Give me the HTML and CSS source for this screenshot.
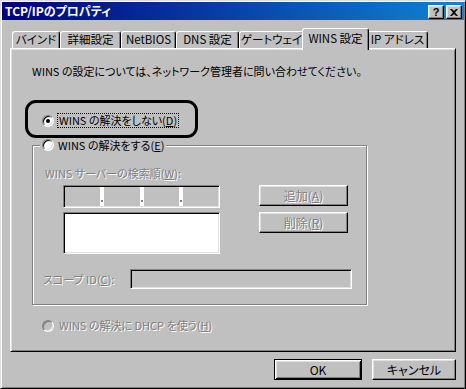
FILE: index.html
```html
<!DOCTYPE html>
<html lang="ja">
<head>
<meta charset="utf-8">
<title>TCP/IPのプロパティ</title>
<link rel="stylesheet" href="styles.css">
</head>
<body>
<div class="window">
  <div class="titlebar">
    <span class="title">TCP/IPのプロパティ</span>
    <div class="title-buttons">
      <div class="tbtn help">?</div>
      <div class="tbtn close">
        <svg width="8" height="7" viewBox="0 0 8 7"><path d="M0 0h2l2 2 2-2h2L5 3.5 8 7H6L4 5 2 7H0l3-3.5z" fill="#000"/></svg>
      </div>
    </div>
  </div>
  <div class="content">
    <div class="tabs">
      <div class="tab tab-bind">バインド</div>
      <div class="tab tab-adv">詳細設定</div>
      <div class="tab tab-netbios">NetBIOS</div>
      <div class="tab tab-dns">DNS 設定</div>
      <div class="tab tab-gw">ゲートウェイ</div>
      <div class="tab tab-wins active">WINS 設定</div>
      <div class="tab tab-ip">IP アドレス</div>
    </div>
    <div class="panel">
      <p class="intro">WINS の設定については、ネットワーク管理者に問い合わせてください。</p>
      <div class="radio-row first">
        <span class="radio checked"></span>
        <span class="label focus">WINS の解決をしない(<u>D</u>)</span>
      </div>
      <div class="group">
        <div class="legend">
          <span class="radio"></span>
          <span class="label">WINS の解決をする(<u>E</u>)</span>
        </div>
        <div class="group-label disabled">WINS サーバーの検索順(<u>W</u>):</div>
        <div class="server-row">
          <div class="server-fields">
            <div class="ipfield">
              <span class="seg"></span><span class="sep"></span>
              <span class="seg"></span><span class="sep"></span>
              <span class="seg"></span><span class="sep"></span>
              <span class="seg"></span>
            </div>
            <div class="listbox"></div>
          </div>
          <div class="server-buttons">
            <div class="btn disabled">追加(<u>A</u>)</div>
            <div class="btn disabled">削除(<u>R</u>)</div>
          </div>
        </div>
        <div class="scope-row">
          <span class="scope-label disabled">スコープ ID(<u>C</u>):</span>
          <div class="field"></div>
        </div>
      </div>
      <div class="radio-row last">
        <span class="radio off"></span>
        <span class="label disabled">WINS の解決に DHCP を使う(<u>H</u>)</span>
      </div>
      <div class="annotation"></div>
    </div>
    <div class="footer">
      <div class="btn default">OK</div>
      <div class="btn cancel">キャンセル</div>
    </div>
  </div>
</div>
</body>
</html>
```
FILE: styles.css
```css
* { box-sizing: border-box; }
html, body { margin: 0; padding: 0; }
body {
  background: #c0c0c0;
  font-family: "Noto Sans CJK JP", "Noto Sans", sans-serif;
  font-size: 11px;
  line-height: 13px;
  color: #000;
  font-feature-settings: "palt";
}
u { text-decoration: underline; text-underline-offset: 1px; }

.window {
  width: 466px;
  height: 389px;
  border: 1px solid;
  border-color: #dfdfdf #000 #000 #dfdfdf;
  box-shadow: inset 1px 1px #fff, inset -1px -1px #808080;
  padding: 1px;
  background: #c0c0c0;
}

.titlebar {
  height: 18px;
  display: flex;
  align-items: center;
  justify-content: space-between;
  background: linear-gradient(90deg, #000080, #1084d0);
  padding: 0 2px 0 3px;
}
.title {
  color: #fff;
  font-weight: bold;
  font-size: 12px;
  line-height: 16px;
  white-space: nowrap;
}
.title-buttons { display: flex; gap: 2px; margin-top: 2px; }
.tbtn {
  width: 16px;
  height: 14px;
  display: flex;
  align-items: center;
  justify-content: center;
  background: #c0c0c0;
  border: 1px solid;
  border-color: #fff #000 #000 #fff;
  box-shadow: inset -1px -1px #808080, inset 1px 1px #dfdfdf;
  font: bold 11px/1 "Liberation Sans", sans-serif;
}

.content { padding: 8px 8px 0; }

.tabs {
  display: flex;
  align-items: flex-end;
  height: 20px;
  padding-left: 2px;
}
.tab {
  height: 17px;
  padding: 0;
  text-align: center;
  border: 1px solid;
  border-bottom: none;
  border-color: #fff #000 #000 #fff;
  border-radius: 3px 3px 0 0;
  box-shadow: inset -1px 0 #808080;
  font-size: 11.5px;
  line-height: 15px;
  white-space: nowrap;
  background: #c0c0c0;
}
.tab-bind { width: 48px; }
.tab-adv { width: 61px; }
.tab-netbios { width: 55px; }
.tab-dns { width: 63px; }
.tab-gw { width: 65px; }
.tab-wins { width: 67px; }
.tab-ip { width: 61px; }
.tab.active {
  height: 22px;
  margin: 0 -2px -2px;
  padding: 0 0 2px;
  line-height: 18px;
  position: relative;
  z-index: 1;
}

.panel {
  position: relative;
  width: 446px;
  height: 304px;
  border: 1px solid;
  border-color: #fff #000 #000 #fff;
  box-shadow: inset 1px 1px #dfdfdf, inset -1px -1px #808080;
  padding: 16px 0 0 21px;
}
.intro { margin: 0; line-height: 13px; white-space: nowrap; }

.radio-row {
  display: flex;
  align-items: center;
  gap: 3px;
  margin-left: 10px;
  height: 15px;
}
.radio-row.first { margin-top: 35px; }
.radio-row.last { margin-top: 13px; gap: 5px; }

.radio {
  position: relative;
  flex: none;
  width: 12px;
  height: 12px;
  border-radius: 50%;
  border: 1px solid;
  border-color: #808080 #fff #fff #808080;
  background: #fff;
  box-shadow: inset 1px 1px #000, inset -1px -1px #dfdfdf;
}
.radio.checked::after {
  content: "";
  position: absolute;
  left: 3px;
  top: 3px;
  width: 4px;
  height: 4px;
  border-radius: 50%;
  background: #000;
}
.radio.off {
  background: #c0c0c0;
  box-shadow: inset 1px 1px #808080, inset -1px -1px #dfdfdf;
}
.label { white-space: nowrap; line-height: 13px; }
.label.focus { border: 1px dotted #000; padding: 0 1px; }

.disabled { color: #808080; text-shadow: 1px 1px 0 #fff; }

.group {
  position: relative;
  width: 335px;
  height: 160px;
  margin-top: 17px;
  border: 1px solid #808080;
  box-shadow: inset 1px 1px #fff, 1px 1px #fff;
  padding: 21px 0 0 12px;
}
.legend {
  position: absolute;
  left: 7px;
  top: -8px;
  height: 14px;
  padding: 0 2px;
  background: #c0c0c0;
  display: flex;
  align-items: center;
  gap: 4px;
}
.group-label { line-height: 12px; white-space: nowrap; }

.server-row {
  display: flex;
  margin: 6px 0 0 18px;
}
.server-fields { display: flex; flex-direction: column; gap: 4px; }
.ipfield, .listbox, .field {
  border: 1px solid;
  border-color: #808080 #fff #fff #808080;
  box-shadow: inset 1px 1px #000, inset -1px -1px #dfdfdf;
}
.ipfield {
  width: 157px;
  height: 23px;
  background: #fff;
  display: flex;
  padding: 1px;
}
.seg { flex: 1; background: #c0c0c0; }
.sep {
  width: 4px;
  display: flex;
  align-items: flex-end;
  justify-content: center;
  padding-bottom: 4px;
}
.sep::after {
  content: "";
  width: 2px;
  height: 2px;
  background: #808080;
}
.listbox { width: 157px; height: 42px; background: #fff; }

.server-buttons {
  display: flex;
  flex-direction: column;
  gap: 6px;
  margin-left: 39px;
}
.btn {
  display: flex;
  align-items: center;
  justify-content: center;
  width: 89px;
  height: 21px;
  background: #c0c0c0;
  border: 1px solid;
  border-color: #fff #000 #000 #fff;
  box-shadow: inset -1px -1px #808080, inset 1px 1px #dfdfdf;
  white-space: nowrap;
  font-size: 12px;
  line-height: 13px;
}

.scope-row {
  display: flex;
  align-items: center;
  margin: 15px 0 0 -2px;
}
.scope-label { width: 87px; white-space: nowrap; }
.field { width: 222px; height: 20px; background: #c0c0c0; }

.annotation {
  position: absolute;
  left: 14px;
  top: 51px;
  width: 173px;
  height: 38px;
  border: 3px solid #000;
  border-radius: 11px;
}

.footer {
  display: flex;
  justify-content: flex-end;
  gap: 10px;
  margin-top: 7px;
}
.footer .btn { height: 21px; }
.btn.default {
  width: 88px;
  border: 1px solid #000;
  box-shadow: inset 1px 1px #fff, inset -1px -1px #000, inset 2px 2px #dfdfdf, inset -2px -2px #808080;
}
.btn.cancel { width: 84px; }
```
